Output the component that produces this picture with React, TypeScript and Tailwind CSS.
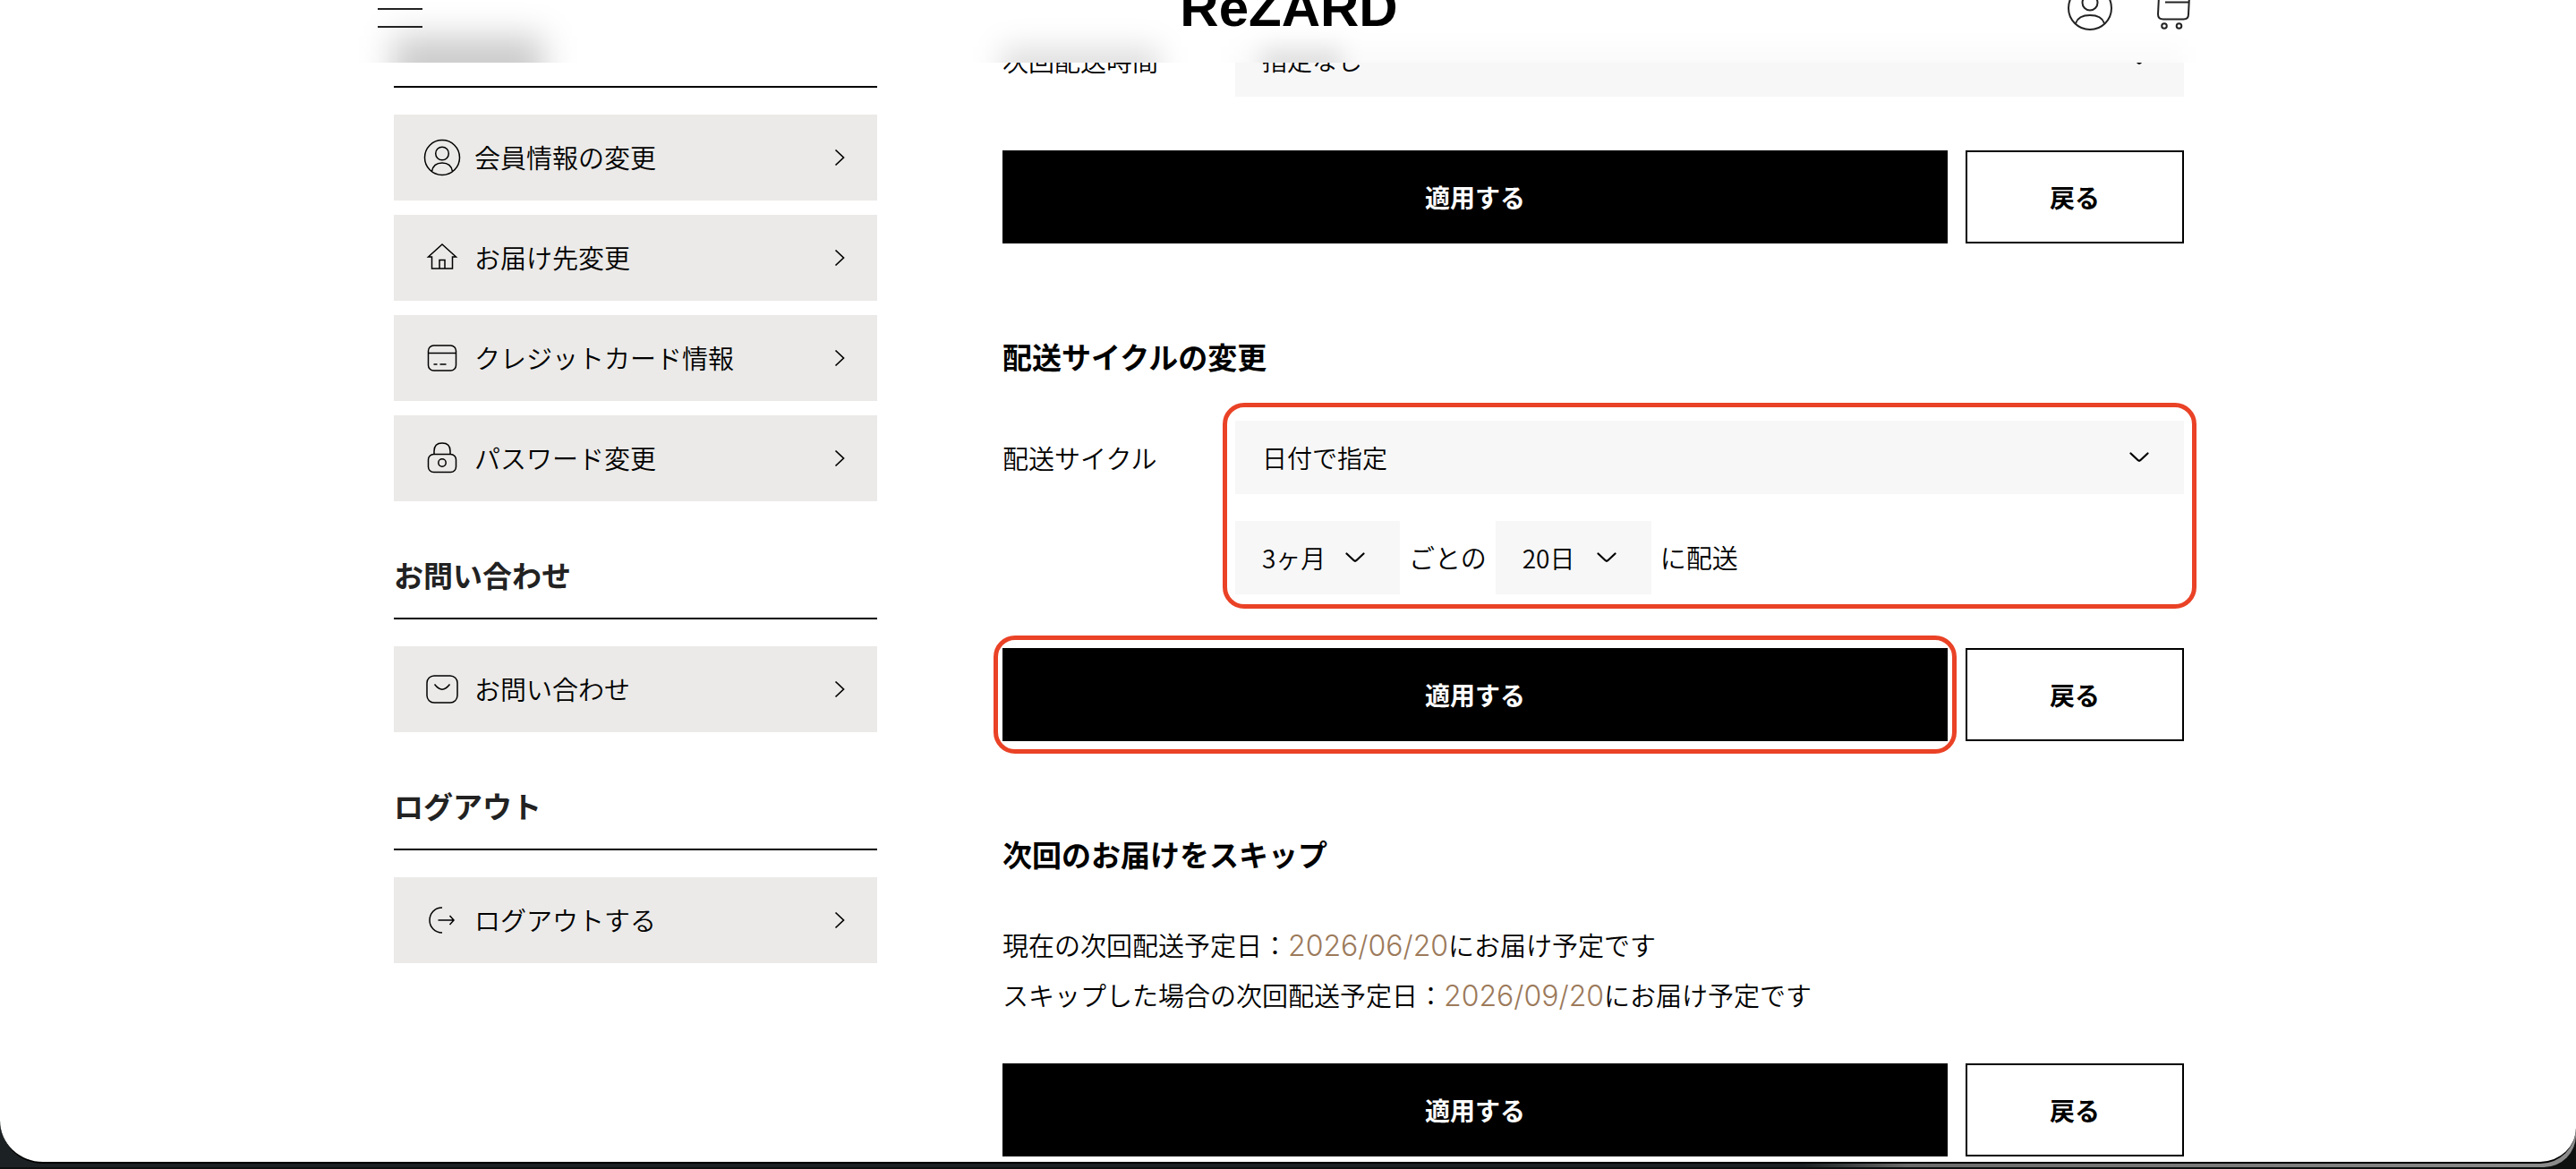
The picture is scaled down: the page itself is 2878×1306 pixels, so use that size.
import type { ReactNode, SVGProps } from "react";

type IconName = "user" | "home" | "card" | "lock" | "mail" | "logout";

type MenuItem = {
  icon: IconName;
  label: string;
};

type MenuGroup = {
  title?: string;
  items: MenuItem[];
};

const MENU: MenuGroup[] = [
  {
    items: [
      { icon: "user", label: "会員情報の変更" },
      { icon: "home", label: "お届け先変更" },
      { icon: "card", label: "クレジットカード情報" },
      { icon: "lock", label: "パスワード変更" },
    ],
  },
  {
    title: "お問い合わせ",
    items: [{ icon: "mail", label: "お問い合わせ" }],
  },
  {
    title: "ログアウト",
    items: [{ icon: "logout", label: "ログアウトする" }],
  },
];

const ICONS: Record<IconName, ReactNode> = {
  user: (
    <>
      <circle cx="20" cy="20" r="19.5" />
      <circle cx="20" cy="15.5" r="7.3" />
      <path d="M8.5 35.5c1-6 5-9.5 11.5-9.5s10.5 3.5 11.5 9.5" />
    </>
  ),
  home: (
    <>
      <path d="M4.5 19 20 5l15.5 14h-4v13h-23V19z" />
      <path d="M17 32v-9.5h6V32" />
    </>
  ),
  card: (
    <>
      <rect x="4.5" y="6" width="31" height="28" rx="6" />
      <path d="M4.5 14.5h31M10.5 27h4M17.5 27h7" />
    </>
  ),
  lock: (
    <>
      <rect x="4.5" y="15.5" width="31" height="20" rx="6" />
      <circle cx="20" cy="25" r="4.2" />
      <path d="M11 15.5V12c0-5.5 3-9 9-9s9 3.5 9 9v3.5" />
    </>
  ),
  mail: (
    <>
      <rect x="3" y="5" width="34" height="30" rx="8" />
      <path d="M11.5 14.5c6 7.5 11 7.5 17 0" />
    </>
  ),
  logout: (
    <>
      <path d="M20 6C11.5 6 6 12.5 6 20s5.5 14 14 14" />
      <path d="M15.5 20H33M28.5 15l4.5 5-4.5 5" />
    </>
  ),
};

function Svg(props: SVGProps<SVGSVGElement>) {
  return <svg fill="none" stroke="currentColor" aria-hidden="true" {...props} />;
}

function MenuLink({ icon, label }: MenuItem) {
  return (
    <a href="#" className="flex h-24 items-center gap-4 bg-[#ebeae8] pr-9 pl-[34px]">
      <Svg viewBox="0 0 40 40" strokeWidth="1.5" className="size-10 shrink-0 overflow-visible">
        {ICONS[icon]}
      </Svg>
      <span className="flex-1 text-[29px]">{label}</span>
      <Svg viewBox="0 0 12 20" strokeWidth="1.7" className="h-5 w-3">
        <path d="M1.5 1.5 10.5 10l-9 8.5" />
      </Svg>
    </a>
  );
}

function Sidebar() {
  return (
    <nav className="flex w-[540px] shrink-0 flex-col gap-14 pt-[22px]">
      {MENU.map(({ title, items }) => (
        <section key={items[0].label}>
          <div className="min-h-[76px] border-b-2 border-black pb-[22px]">
            {title && <h2 className="text-[33px] leading-[52px] font-bold text-[#222]">{title}</h2>}
          </div>
          <div className="mt-[30px] flex flex-col gap-4">
            {items.map((item) => (
              <MenuLink key={item.label} {...item} />
            ))}
          </div>
        </section>
      ))}
    </nav>
  );
}

type SelectProps = {
  id?: string;
  label?: string;
  options: string[];
  className: string;
};

function Select({ id, label, options, className }: SelectProps) {
  return (
    <div className={`relative ${className}`}>
      <select
        id={id}
        aria-label={label}
        className="block h-[82px] w-full appearance-none bg-[#f7f7f7] pl-[30px] text-[28px]"
      >
        {options.map((option) => (
          <option key={option}>{option}</option>
        ))}
      </select>
      <Svg
        viewBox="0 0 22 12"
        strokeWidth="2.2"
        strokeLinecap="round"
        className="pointer-events-none absolute top-[35px] right-[39px] h-3 w-[22px]"
      >
        <path d="M1.5 1.5 9.5 9q1.5 1.5 3 0l8-7.5" />
      </Svg>
    </div>
  );
}

function Highlight({ className }: { className: string }) {
  return (
    <div
      className={`pointer-events-none absolute rounded-[24px] border-[5px] border-[#ea4226] ${className}`}
    />
  );
}

function Actions({ highlighted = false }: { highlighted?: boolean }) {
  return (
    <div className="flex gap-5">
      <div className="relative flex-1">
        <button type="submit" className="block h-[104px] w-full bg-black text-[28px] font-bold text-white">
          適用する
        </button>
        {highlighted && <Highlight className="-inset-x-2.5 -inset-y-3.5" />}
      </div>
      <button type="button" className="h-[104px] w-[244px] border-2 border-black text-[28px] font-bold">
        戻る
      </button>
    </div>
  );
}

/* Soft shadows of the content that has scrolled under the frosted header */
function FrostedLayer() {
  return (
    <div className="absolute inset-0 mx-auto flex max-w-[2000px] gap-[140px] pt-10" aria-hidden="true">
      <div className="w-[540px] shrink-0">
        <div className="h-20 w-[168px] bg-black/20 blur-[18px]" />
      </div>
      <div className="flex flex-1 pt-3">
        <div className="w-[260px] shrink-0">
          <div className="h-20 w-[176px] bg-black/12 blur-[16px]" />
        </div>
        <div className="h-20 flex-1 bg-black/2 pl-[30px] blur-[12px]">
          <div className="h-20 w-[90px] bg-black/10" />
        </div>
      </div>
    </div>
  );
}

function Header() {
  return (
    <header className="absolute inset-x-0 top-0 z-10 h-[70px] overflow-hidden bg-white pl-0.5">
      <FrostedLayer />
      <div className="relative mx-auto grid h-full max-w-[2036px] grid-cols-[1fr_auto_1fr] content-end items-end pb-[31px] text-[#222]">
        <button type="button" aria-label="メニュー" className="mb-2 flex w-[50px] flex-col gap-[18px]">
          <span className="h-0.5 w-full bg-[#222]" />
          <span className="h-0.5 w-full bg-[#222]" />
        </button>
        <a
          href="#"
          className="font-['Liberation_Sans',sans-serif] text-[60px] leading-[60px] font-bold text-black"
        >
          ReZARD
        </a>
        <div className="mb-[5px] flex items-end justify-end gap-12 pr-2.5">
          <a href="#" aria-label="マイページ">
            <Svg viewBox="0 0 50 50" strokeWidth="2" className="block size-[50px]">
              <circle cx="25" cy="25" r="24" />
              <circle cx="25" cy="19" r="8.5" />
              <path d="M9 42c2-6 8-9 16-9s14 3 16 9" />
            </Svg>
          </a>
          <a href="#" aria-label="カート">
            <Svg viewBox="0 0 40 50" strokeWidth="2" className="block h-[50px] w-10">
              <path d="M1 4h5l1 8h31l-1 20q0 5.5-5.5 5.5H9Q3 37.5 3 32l1-20M11 18.5h27" />
              <circle cx="10" cy="45" r="2.8" />
              <circle cx="26.5" cy="45" r="2.8" />
            </Svg>
          </a>
        </div>
      </div>
    </header>
  );
}

function FormRow({ id, label, children }: { id: string; label: string; children: ReactNode }) {
  return (
    <div className="flex items-start">
      <label htmlFor={id} className="w-[260px] shrink-0 text-[29px] leading-[82px]">
        {label}
      </label>
      <div className="relative flex-1">{children}</div>
    </div>
  );
}

function SectionTitle({ children }: { children: ReactNode }) {
  return <h2 className="mt-[102px] mb-12 text-[33px] leading-[48px] font-bold">{children}</h2>;
}

function DeliveryDate({ label, date }: { label: string; date: string }) {
  return (
    <p>
      {label}：
      <time className="font-['Inter',sans-serif] text-[32px] leading-none font-light text-[#9c7a5b]">
        {date}
      </time>
      にお届け予定です
    </p>
  );
}

export default function App() {
  return (
    <div className="relative min-h-screen overflow-hidden bg-[#0e0f0f] font-['Noto_Sans_CJK_JP',sans-serif] font-[350] text-black">
      {/* Window frame behind the page */}
      <div className="rounded-br-[36px] bg-linear-to-r from-[#1c2123] from-70% via-[#6b6a6a] via-74% to-[#8c8c8c] pb-1">
        <div className="rounded-br-[40px] rounded-bl-[48px] border-b-2 border-black bg-white pb-1.5 pl-0.5">
          <div className="mx-auto flex max-w-[2000px] gap-[140px]">
            <Sidebar />
            <main className="min-w-0 flex-1 pt-[26px]">
              <form className="flex flex-col gap-[60px]">
                <FormRow id="time" label="次回配送時間">
                  <Select id="time" options={["指定なし"]} className="w-full" />
                </FormRow>
                <Actions />
              </form>

              <SectionTitle>配送サイクルの変更</SectionTitle>
              <form className="flex flex-col gap-[60px]">
                <FormRow id="cycle" label="配送サイクル">
                  <Select id="cycle" options={["日付で指定"]} className="w-full" />
                  <div className="mt-[30px] flex items-center gap-2.5 text-[29px]">
                    <Select label="月" options={["3ヶ月"]} className="w-[184px]" />
                    <span>ごとの</span>
                    <Select label="日" options={["20日"]} className="w-[174px]" />
                    <span>に配送</span>
                  </div>
                  <Highlight className="-inset-x-3.5 -top-5 -bottom-4" />
                </FormRow>
                <Actions highlighted />
              </form>

              <SectionTitle>次回のお届けをスキップ</SectionTitle>
              <form className="flex flex-col gap-12">
                <div className="py-px text-[29px] leading-[56px]">
                  <DeliveryDate label="現在の次回配送予定日" date="2026/06/20" />
                  <DeliveryDate label="スキップした場合の次回配送予定日" date="2026/09/20" />
                </div>
                <Actions />
              </form>
            </main>
          </div>
        </div>
      </div>
      <Header />
    </div>
  );
}
